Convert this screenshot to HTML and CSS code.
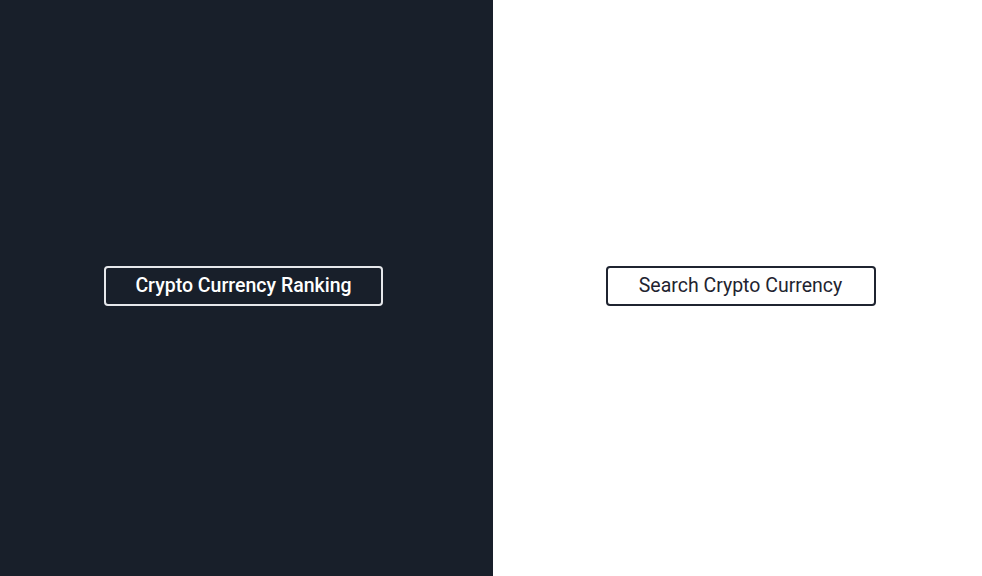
FILE: index.html
```html
<!DOCTYPE html>
<html lang="en">
<head>
<meta charset="utf-8">
<title>Crypto</title>
<link rel="stylesheet" href="styles.css">
</head>
<body>
<main class="split">
  <section class="panel panel-dark">
    <button class="btn btn-light-outline">Crypto Currency Ranking</button>
  </section>
  <section class="panel panel-light">
    <button class="btn btn-dark-outline">Search Crypto Currency</button>
  </section>
</main>
</body>
</html>
```
FILE: styles.css
```css
* { box-sizing: border-box; }
html, body { margin: 0; padding: 0; height: 100%; }
body { font-family: Roboto, "Noto Sans", sans-serif; background: #ffffff; }
.split {
  display: grid;
  grid-template-columns: 493px 1fr;
  height: 100vh;
}
.panel {
  display: flex;
  align-items: center;
  justify-content: center;
  padding-bottom: 4px;
}
.panel-dark { background: #181f2a; padding-right: 6px; }
.panel-light { background: #ffffff; padding-left: 6px; }
.btn {
  font-family: Roboto, "Noto Sans", sans-serif;
  font-size: 19.5px;
  line-height: 24px;
  padding: 6px 0;
  border-radius: 4px;
  background: transparent;
  cursor: pointer;
  text-align: center;
}
.btn-light-outline {
  color: #ffffff;
  font-weight: 500;
  border: 2px solid #e5e7eb;
  width: 279px;
}
.btn-dark-outline {
  color: #1f2430;
  font-weight: 400;
  border: 2px solid #1f2430;
  width: 270px;
}
```
